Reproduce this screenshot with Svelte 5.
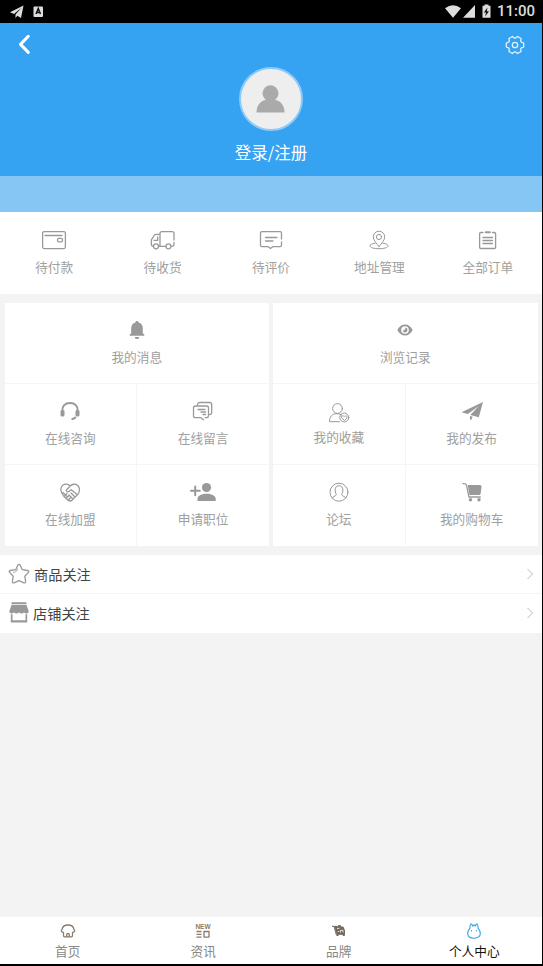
<script lang="ts">
  const orders = [
    { icon: 'wallet', label: '待付款' },
    { icon: 'truck', label: '待收货' },
    { icon: 'comment', label: '待评价' },
    { icon: 'pin', label: '地址管理' },
    { icon: 'clipboard', label: '全部订单' }
  ];

  const panels = [
    [
      { icon: 'bell', label: '我的消息', wide: true },
      { icon: 'headset', label: '在线咨询' },
      { icon: 'messages', label: '在线留言' },
      { icon: 'handshake', label: '在线加盟' },
      { icon: 'person-add', label: '申请职位' }
    ],
    [
      { icon: 'eye', label: '浏览记录', wide: true },
      { icon: 'favorite', label: '我的收藏' },
      { icon: 'plane', label: '我的发布' },
      { icon: 'forum', label: '论坛' },
      { icon: 'cart', label: '我的购物车' }
    ]
  ];

  const follows = [
    { icon: 'star', label: '商品关注' },
    { icon: 'shop', label: '店铺关注' }
  ];

  const tabs = [
    { icon: 'home', label: '首页' },
    { icon: 'news', label: '资讯' },
    { icon: 'brand', label: '品牌' },
    { icon: 'me', label: '个人中心' }
  ];

  let activeTab = $state('me');

  // six rounded teeth around the center of a 20x20 box
  const gear = [0, 60, 120, 180, 240, 300]
    .flatMap((a) => [[a - 24, 7], [a - 13, 8.9], [a + 13, 8.9], [a + 24, 7]])
    .map(([a, r]) => {
      const t = (a * Math.PI) / 180;
      return `${(10 + r * Math.cos(t)).toFixed(2)},${(10 + r * Math.sin(t)).toFixed(2)}`;
    })
    .join(' ');
</script>

{#snippet icon(name: string)}
  <svg class="icon" viewBox="0 0 28 24" width="28" height="24">
    {#if name === 'wallet'}
      <rect x="2.6" y="3.6" width="22.8" height="17" rx="1.5" />
      <path d="M5 7.5h17" />
      <rect x="17.5" y="10.4" width="5" height="3.4" rx="1.2" />
    {:else if name === 'truck'}
      <path d="M11 18.3V5.5q0-1.900 1.900-1.900h10.200q1.900 0 1.900 1.900v6.500M25 14.500v1.800q0 2-2.300 2M10 18.300h6.500M4.200 18.300q-1.800 0-1.800-2v-4.500L5.500 7q.6-.6 1.500-.6h4M5 12.300h3.700V8.800" />
      <circle cx="7" cy="18.300" r="2.500" />
      <circle cx="19.400" cy="18.300" r="2.500" />
    {:else if name === 'comment'}
      <path d="M24.500 11V5q0-1.400-1.400-1.400H4.900q-1.400 0-1.400 1.400v12.200q0 1.400 1.400 1.400h6l2.600 2 2.600-2h7q1.400 0 1.400-1.400V14M8.500 9.500h11.500M8.500 13h7.500" />
    {:else if name === 'pin'}
      <g class="thin">
        <path d="M14 18.500C11 15 8.300 12 8.300 8.900a5.700 5.700 0 0 1 11.400 0C19.700 12 17 15 14 18.500z" />
        <circle cx="14" cy="9" r="2.600" />
        <path d="M10 15.300c-3 .3-5 1.200-5 2.600 0 1.700 4 2.800 9 2.800s9-1.100 9-2.800c0-1.400-2-2.300-5-2.600" />
      </g>
    {:else if name === 'clipboard'}
      <path d="M9 4.500H6.900q-1.300 0-1.300 1.300v13.400q0 1.300 1.300 1.300h13.400q1.300 0 1.300-1.300V5.800q0-1.300-1.300-1.300H18.500M9 9.500h9.500M9 12.500h9.500M9 15.500h9.500" />
      <path class="thick" d="M11.800 4.300h4" />
    {:else if name === 'bell'}
      <path class="solid" d="M14 3c.9 0 1.600.6 1.700 1.500 2.600.7 4.100 3 4.100 5.800v5l1.500 1.300v1.200H6.700v-1.200l1.500-1.300v-5c0-2.800 1.500-5.100 4.100-5.800C12.400 3.600 13.100 3 14 3zM11.800 18.900h4.400c0 1.300-.9 2.200-2.200 2.200s-2.200-.9-2.200-2.200z" />
    {:else if name === 'headset'}
      <path class="thick" d="M6.300 12C6 7 9 4 14 4s8 3 7.700 8" />
      <rect class="solid" x="4.500" y="11" width="4" height="6.500" rx="1.500" />
      <rect class="solid" x="19.500" y="11" width="4" height="6.500" rx="1.500" />
      <path class="thick" d="M19.300 18.500q-1.300 1.300-3 1.600" />
    {:else if name === 'messages'}
      <path d="M8.500 5.500q.3-2 2.200-2h10q2 0 2 2v8.200q0 1.600-1.800 1.800M14.500 20.700l-2.500-2H6.500q-2 0-2-2V9q0-2 2-2h11q2 0 2 2v7.500q0 2-1.800 2.200h-1.500M9 10.500h7M12 13h4.500M14 15.500h2.500" />
    {:else if name === 'handshake'}
      <path d="M8 16.500 5.700 13C3.800 9.500 5 5 9 4.200c2.200-.4 4 .5 5.200 1.800C16 4 19.500 3.500 21.700 5.500c2.500 2.500 2 6 .2 8.700l-6 6.200q-1.700 1.200-3.400 0zM14.200 6l-4 4.200q.2 2 2.300 1.500l2.800-2 6 5M7 12.500l4 4M8 16.500l3-3M10 18.500l3-3M12 20.300l3-3M15 13l4 4M13 15l4 4" />
    {:else if name === 'person-add'}
      <circle class="solid" cx="17.500" cy="7.500" r="4.600" />
      <path class="solid" d="M8.500 21v-2.500c0-3 5-4.800 9-4.800s9.200 1.800 9.200 4.800V21z" />
      <path class="thick" d="M2 10.800h8.800M6.200 6.400v8.800" />
    {:else if name === 'eye'}
      <path class="solid" fill-rule="evenodd" d="M6.300 12C8 8.500 10.700 6.500 14 6.500s6 2 7.700 5.500c-1.700 3.500-4.400 5.500-7.700 5.500S8 15.500 6.300 12zM14 8.200a3.800 3.800 0 1 0 0 7.600 3.800 3.800 0 0 0 0-7.600z" />
      <path class="solid" d="M14.500 9.500a2.500 2.500 0 1 1-2.900 3q2.500.3 2.900-3z" />
    {:else if name === 'favorite'}
      <g class="thin">
        <circle cx="12.500" cy="7.500" r="4.900" />
        <path d="M14.500 20.700H4.500c0-5 2.500-8 7.500-8q3 0 4.500 1.200" />
        <circle cx="19.300" cy="16.500" r="4.500" />
        <path d="M19.300 19.300l-2.700-2.500c-.8-1.800 1.500-2.700 2.700-1.200 1.200-1.500 3.500-.6 2.700 1.200z" />
      </g>
    {:else if name === 'plane'}
      <path class="solid" d="M25 3 3.500 13.200l6.300 1.900L20.500 7.200 12.300 16l8.500 2.300zM12 16.900l2.700.9-1.500 3.200-1.200-.7z" />
    {:else if name === 'forum'}
      <g class="thin">
        <circle cx="14" cy="12.200" r="9" />
        <path d="M7 18c.5-1.500 3.500-1.500 4.300-3.200.3-.8-1.200-1.600-1.200-4.700 0-3 1.500-4.300 3.900-4.300s3.900 1.300 3.900 4.300c0 3.100-1.500 3.900-1.200 4.700.8 1.700 3.800 1.700 4.300 3.200" />
      </g>
    {:else if name === 'cart'}
      <path d="M5 3.600q3-.3 3.400 1.200L11 17h11.300" />
      <path class="solid" d="M9.700 5h12.300q1.700 0 1.500 1.700l-.8 6.800q-.3 1.500-1.900 1.500h-9.300z" />
      <circle class="solid" cx="12.500" cy="19.800" r="1.700" />
      <circle class="solid" cx="21" cy="19.800" r="1.700" />
    {/if}
  </svg>
{/snippet}

<div class="screen">
  <div class="status-bar">
    <svg class="notice" viewBox="0 0 36 14" width="36" height="14">
      <path fill="#ddd" d="M13.500.5 0 7.300l4 1.700 7.500-6.200-6 6.700v3.700l1.800-2.400 3.700 2.200z" />
      <rect fill="#ddd" x="23.500" y="1.500" width="9.500" height="10.500" rx="1" />
      <path fill="none" stroke="#111" stroke-width="1.500" d="m26 9 2.250-5.500L30.500 9M27 7.500h2.500" />
    </svg>
    <svg class="signals" viewBox="0 0 47 16" width="47" height="16">
      <path fill="#ddd" d="M0 4.300q8-6 16 0L8 13.800zM30 1v12.800H18z" />
      <path fill="#ddd" d="M39.500.5h4v1.300h2v12h-8v-12h2z" />
      <path fill="#111" d="m42.500 3.500-3.700 5h2.200l-.8 4 3.800-5.200h-2.200z" />
    </svg>
    <span class="time">11:00</span>
  </div>

  <header class="profile">
    <div class="toolbar">
      <svg viewBox="0 0 14 22" width="14" height="22">
        <path class="back" d="M10.300 2.300 2.500 10.400l7.800 8" />
      </svg>
      <svg viewBox="0 0 20 20" width="20" height="20">
        <polygon class="gear" points={gear} />
        <circle class="gear" cx="10" cy="10" r="2.700" />
      </svg>
    </div>
    <div class="avatar">
      <svg viewBox="0 0 28 28" width="28" height="28">
        <circle cx="13.500" cy="8.300" r="8" />
        <path d="M-.5 27.500c0-7 4-12.200 10-12.700h8c6 .5 10 5.700 10 12.700z" />
      </svg>
    </div>
    <a class="login" href="#login">登录/注册</a>
  </header>
  <div class="strip"></div>

  <nav class="orders">
    {#each orders as item}
      <div class="item">
        {@render icon(item.icon)}
        <span>{item.label}</span>
      </div>
    {/each}
  </nav>

  <div class="panels">
    {#each panels as panel}
      <div class="panel">
        {#each panel as item}
          <div class="item" class:wide={item.wide} class:tight={item.icon === 'favorite'}>
            {@render icon(item.icon)}
            <span>{item.label}</span>
          </div>
        {/each}
      </div>
    {/each}
  </div>

  <div class="follows">
    {#each follows as item}
      <div class="follow">
        <svg class="lead" viewBox="0 0 22 22" width="22" height="22">
          {#if item.icon === 'star'}
            <path class="outline" d="M11 1.300q.8 0 1.200.9l2.100 4.500 5.300.8q1.900.5.800 1.900l-3.600 3.900.8 5.200q0 1.900-1.700 1.300L11 17.600l-4.900 2.200q-1.700.6-1.700-1.300l.8-5.200L1.600 9.400q-1.100-1.400.8-1.900l5.300-.8 2.100-4.500q.4-.9 1.200-.9z" />
            <path class="outline faint" d="M5 9.600q3.500-.4 4.800-4" />
          {:else}
            <path class="fill" d="M3.500.3h15v2h-15zM3.500 3.100h15l2.200 6.200q0 2.200-2.200 2.200-1.900 0-2.500-1.200-.6 1.200-2.500 1.200T11 10.300q-.6 1.200-2.500 1.200T6 10.300q-.6 1.200-2.500 1.200-2.200 0-2.200-2.200zM2.800 12.300h1.700v6h13v-6h1.700v8.300H2.800z" />
          {/if}
        </svg>
        <span>{item.label}</span>
        <svg class="arrow" viewBox="0 0 8 12" width="8" height="12">
          <path d="M1.500 1 6.500 6l-5 5" />
        </svg>
      </div>
    {/each}
  </div>

  <nav class="tabs">
    {#each tabs as tab}
      <button class="tab" class:active={activeTab === tab.icon} onclick={() => (activeTab = tab.icon)}>
        <svg viewBox="0 0 16 16" width="16" height="16">
          {#if tab.icon === 'home'}
            <path d="M3.500 9.300C1.300 9.500.8 7.500 2 6.500 2.500 3.300 5 2 8 2s5.500 1.300 6 4.500c1.200 1 .7 3-1.500 2.800v3.200q0 1.300-1.300 1.300H4.800q-1.300 0-1.300-1.300zM6.700 13.800v-2.500q1.300-2 2.600 0v2.500" />
          {:else if tab.icon === 'news'}
            <text x="8" y="6" text-anchor="middle">NEW</text>
            <path d="M1.500 8.500h5M1.500 11.300h5M1.500 14.100h5M9 8.500h5v5.600H9z" />
          {:else if tab.icon === 'brand'}
            <path d="M1 3.300h2.200l2 7.700h7.500" />
            <path class="body" d="M3.500 3.500 5 2.500l1.500 1 1-1.500 2 .3 1 1.200 2 .2 1.500 3.800v4H5.800zM5.500 11.500h2V13h-2zM11.800 11.500h2V13h-2z" />
            <path class="gap" d="m6 5.700 2.500-.5M9.500 9.500V7.300h2.500v2.200M6.800 8.500h1.500" />
          {:else}
            <path d="M3.900 5.200Q3.700 2.200 5 .9q1.300.4 1.800 2.200L8 1.900l1.200 1.200Q9.700 1.300 11 .9q1.300 1.300 1.100 4.300c1.400 1.800 2.200 3.600 2.200 5.100q0 4.900-6.300 4.900t-6.300-4.900c0-1.500.8-3.300 2.200-5.100zM5.500 7v1.300M10.500 7v1.300" />
          {/if}
        </svg>
        <span>{tab.label}</span>
      </button>
    {/each}
  </nav>
</div>

<style>
  :global(body) {
    margin: 0;
    background: #000;
  }

  .screen {
    width: 542px;
    height: 964px;
    display: flex;
    flex-direction: column;
    background: #f3f3f3;
    font-family: 'Noto Sans CJK SC', sans-serif;
    color: #a0a0a0;
  }

  svg {
    display: block;
    flex-shrink: 0;
    overflow: visible;
  }

  .status-bar {
    height: 23px;
    box-sizing: border-box;
    padding: 0 7px 0 10px;
    display: flex;
    align-items: center;
    background: #000;
  }

  .signals {
    margin-left: auto;
    margin-right: 5px;
  }

  .time {
    color: #ddd;
    font-family: Roboto, sans-serif;
    font-size: 15px;
    font-weight: 500;
    line-height: 23px;
  }

  .profile {
    height: 153px;
    display: flex;
    flex-direction: column;
    align-items: center;
    background: #35a3f1;
  }

  .toolbar {
    align-self: stretch;
    height: 44px;
    padding: 0 17px 0 18px;
    display: flex;
    align-items: center;
    justify-content: space-between;
  }

  .back {
    fill: none;
    stroke: #fff;
    stroke-width: 3;
    stroke-linecap: round;
    stroke-linejoin: round;
  }

  .gear {
    fill: none;
    stroke: #e3f2fd;
    stroke-width: 1.3;
    stroke-linejoin: round;
  }

  .avatar {
    width: 60px;
    height: 60px;
    margin-right: 1px;
    border: 2px solid #8dcaf6;
    border-radius: 50%;
    display: flex;
    align-items: center;
    justify-content: center;
    background: #eee;
    fill: #aaa;
  }

  .login {
    margin-top: 9px;
    color: #fff;
    font-size: 16.5px;
    line-height: 24px;
    text-decoration: none;
  }

  .strip {
    height: 36px;
    background: #86c6f5;
  }

  .orders {
    height: 82px;
    display: flex;
    background: #fff;
  }

  .orders .item {
    flex: 1;
    padding-top: 16px;
  }

  .item {
    display: flex;
    flex-direction: column;
    align-items: center;
    gap: 6px;
    box-sizing: border-box;
    font-size: 12.7px;
    line-height: 18px;
  }

  .icon {
    fill: none;
    stroke: #999;
    stroke-width: 1.3;
    stroke-linecap: round;
    stroke-linejoin: round;
  }

  .icon .solid {
    fill: #999;
    stroke: none;
  }

  .icon .thin {
    stroke-width: 1;
  }

  .icon .thick {
    stroke-width: 2;
  }

  .panels {
    margin: 9px 4.500px;
    display: flex;
    gap: 4px;
  }

  .panel {
    flex: 1;
    display: grid;
    grid-template-columns: 1fr 1fr;
    grid-template-rows: 80px 80px 81px;
    gap: 1px;
    background: #f5f5f5;
  }

  .panel .item {
    padding-top: 15px;
    background: #fff;
  }

  .panel .wide {
    grid-column: span 2;
  }

  .panel .tight {
    padding-top: 17px;
    gap: 3px;
  }

  .follows {
    background: #fff;
  }

  .follow {
    height: 39px;
    box-sizing: border-box;
    padding: 0 8px;
    display: flex;
    align-items: center;
    color: #444;
    font-size: 14.2px;
  }

  .follow:first-child {
    border-bottom: 1px solid #f3f3f3;
  }

  .follow:last-child {
    padding-bottom: 1px;
  }

  .follow span {
    margin-left: 4px;
  }

  .follow:last-child span {
    margin-left: 3px;
  }

  .outline {
    fill: none;
    stroke: #999;
    stroke-width: 1.3;
    stroke-linejoin: round;
  }

  .faint {
    stroke: #bbb;
  }

  .fill {
    fill: #999;
  }

  .arrow {
    margin-left: auto;
    fill: none;
    stroke: #bbb;
  }

  .tabs {
    height: 47px;
    margin-top: auto;
    display: flex;
    background: #fff;
  }

  .tab {
    flex: 1;
    padding: 6px 0 0;
    border: 0;
    display: flex;
    flex-direction: column;
    align-items: center;
    gap: 3px;
    background: none;
    color: #888;
    font-family: inherit;
    font-size: 12.7px;
    line-height: 18px;
  }

  .tab svg {
    fill: none;
    stroke: #8c7b6b;
    stroke-width: 1.3;
    stroke-linejoin: round;
  }

  .tab text {
    fill: #8c7b6b;
    stroke: none;
    font-family: 'Liberation Sans', sans-serif;
    font-size: 6.5px;
    font-weight: 700;
  }

  .tab .body {
    fill: #75685b;
    stroke: none;
  }

  .tab .gap {
    stroke: #eee;
    stroke-width: 0.9;
  }

  .tab.active {
    color: #111;
  }

  .tab.active svg {
    stroke: #35a3e0;
    stroke-width: 1.1;
  }
</style>
